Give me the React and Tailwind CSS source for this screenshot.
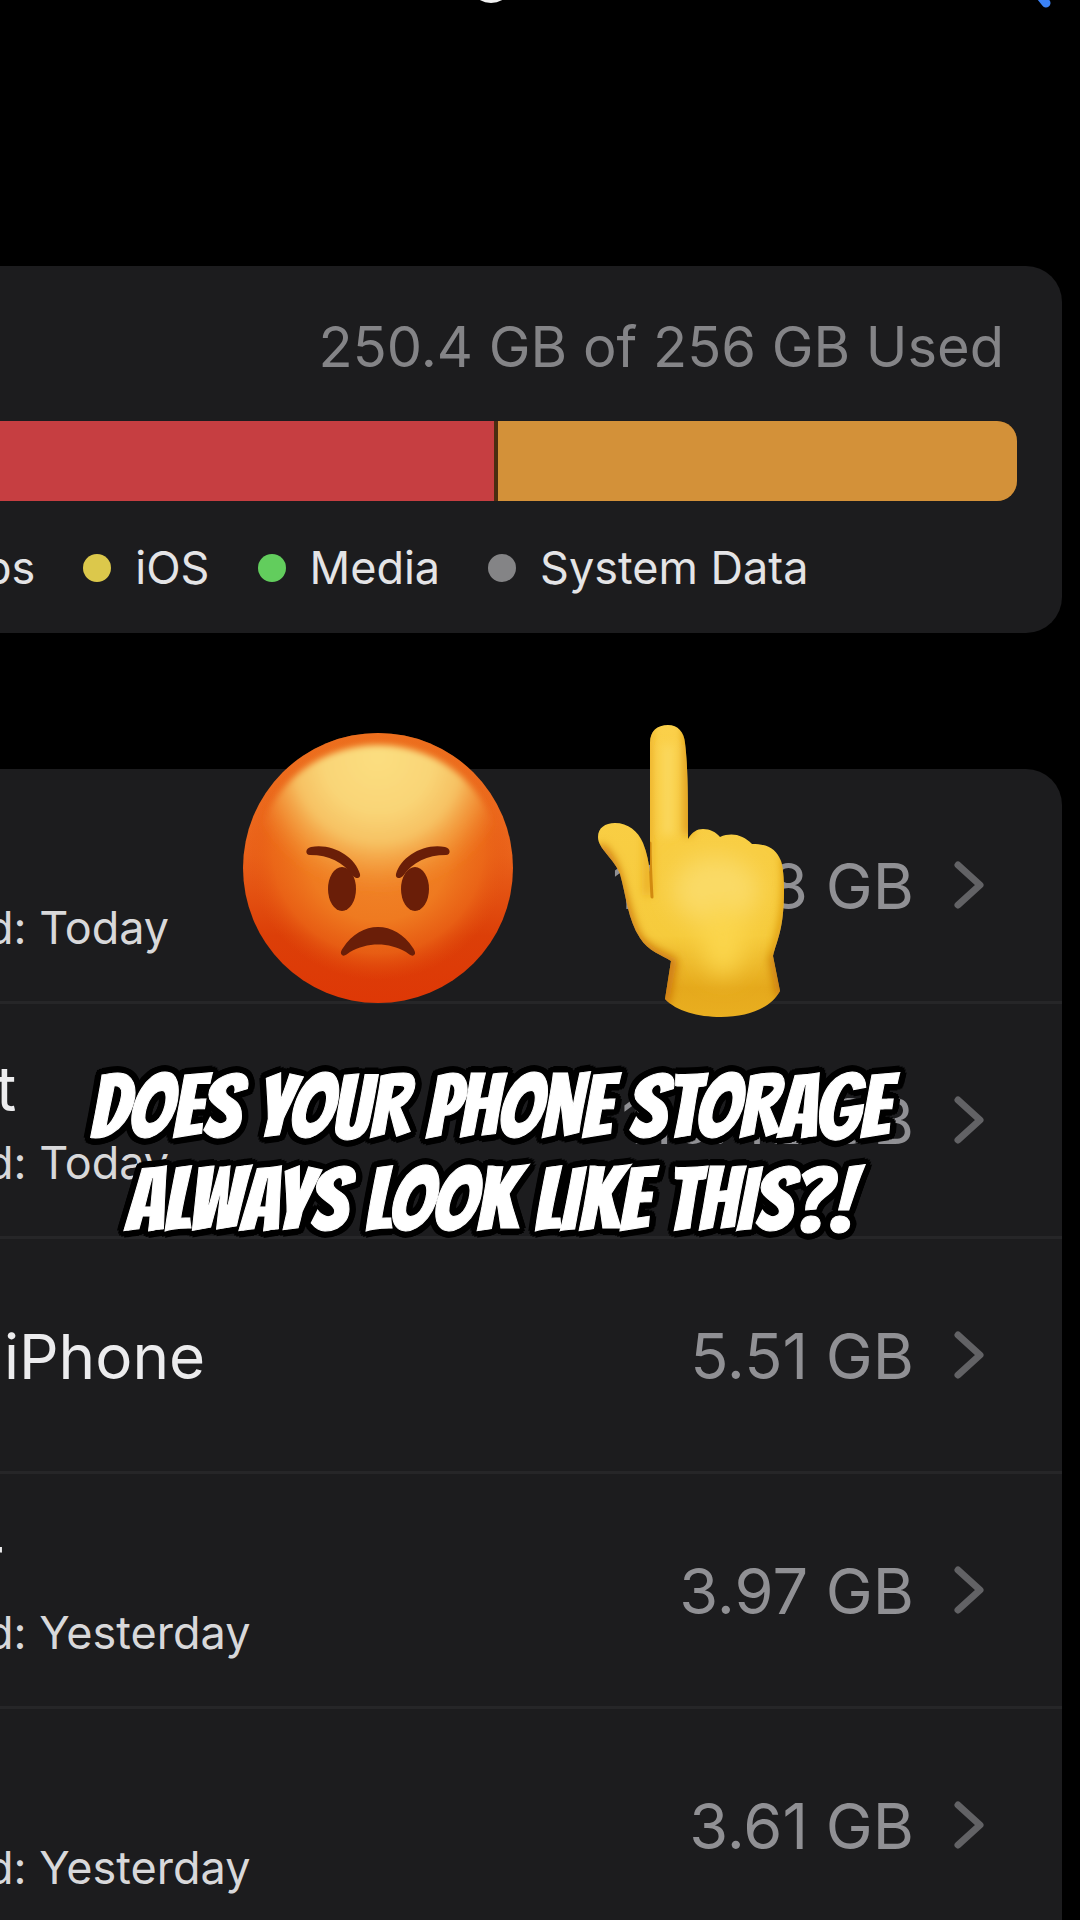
const legend = [
  { label: "ps", dot: "" },
  { label: "iOS", dot: "bg-[#dcc84b]" },
  { label: "Media", dot: "bg-[#62cd5d]" },
  { label: "System Data", dot: "bg-[#848486]" },
];

const apps = [
  { name: "", indent: "", used: "d: Today", size: "128.38 GB" },
  { name: "t", indent: "pl-4", used: "d: Today", size: "110.42 GB" },
  { name: "iPhone", indent: "pl-6", used: "", size: "5.51 GB" },
  { name: "r", indent: "pl-0", used: "d: Yesterday", size: "3.97 GB" },
  { name: "", indent: "", used: "d: Yesterday", size: "3.61 GB" },
];

function TopBar() {
  return (
    <header className="flex h-[266px] items-start justify-between pl-[480px] pr-[26px]">
      <svg className="h-1 w-6" viewBox="0 0 24 4" aria-hidden="true">
        <ellipse cx="11" cy="-6" rx="15" ry="9" fill="#f2f2f2" />
      </svg>
      <button aria-label="Search">
        <svg className="h-3 w-5" viewBox="0 0 20 12" aria-hidden="true">
          <path d="M4 -7 L12 3" stroke="#3b82f6" strokeWidth="9" strokeLinecap="round" />
        </svg>
      </button>
    </header>
  );
}

function StorageCard() {
  return (
    <section className="mr-[18px] rounded-r-[36px] bg-[#1c1c1e] pb-[35px] pt-[45px]">
      <h2 className="pr-[58px] text-right text-[56px] leading-[72px] text-[#848487]">
        250.4 GB of 256 GB Used
      </h2>

      {/* usage bar */}
      <div className="mr-[45px] mt-[38px] flex h-20 gap-1 overflow-hidden rounded-r-[20px] bg-[#4a2d10]">
        <div className="w-[494px] bg-[#c63e41]" />
        <div className="flex-1 bg-[#d39139]" />
      </div>

      <ul className="-ml-4 mt-[37px] flex gap-12 text-[45px] leading-[60px] text-[#e4e4e6]">
        {legend.map((item) => (
          <li key={item.label} className="flex items-center gap-6">
            {item.dot && <span className={`size-7 rounded-full ${item.dot}`} />}
            {item.label}
          </li>
        ))}
      </ul>
    </section>
  );
}

function AppRow({ name, indent, used, size }) {
  return (
    <li className="border-b-3 border-[#262628]">
      <button className="flex h-[232px] w-full items-center text-left">
        <span className="-ml-5 flex flex-1 flex-col pt-1">
          {/* the name line keeps its height when only the date shows */}
          {(name || used) && (
            <span className={`text-[62px] leading-[76px] text-[#ececee] ${indent}`}>
              {name || "\u00a0"}
            </span>
          )}
          {used && (
            <span className="pl-[6px] pt-[6px] text-[45px] leading-[60px] text-[#d8d8da]">{used}</span>
          )}
        </span>
        <span className="pt-[2px] text-[63px] leading-[76px] text-[#909094]">{size}</span>
        <svg className="ml-10 mr-[76px] h-[50px] w-8" viewBox="0 0 32 50" fill="none" aria-hidden="true">
          <path d="M4 5 L26 25 L4 45" stroke="#626265" strokeWidth="7" strokeLinecap="round" strokeLinejoin="round" />
        </svg>
      </button>
    </li>
  );
}

function AngryFace() {
  return (
    <svg className="mt-2 size-[270px]" viewBox="0 0 270 270" role="img" aria-label="Angry face">
      <defs>
        <linearGradient id="faceBase" x1="0" y1="0" x2="0" y2="1">
          <stop offset="0" stopColor="#f07a26" />
          <stop offset="0.45" stopColor="#ea621a" />
          <stop offset="0.75" stopColor="#dc3f08" />
          <stop offset="1" stopColor="#de3806" />
        </linearGradient>
        <radialGradient id="faceMid" cx="135" cy="115" r="132" gradientUnits="userSpaceOnUse">
          <stop offset="0" stopColor="#f1882c" />
          <stop offset="0.55" stopColor="#ef7a20" />
          <stop offset="0.8" stopColor="#ec6a18" stopOpacity="0.7" />
          <stop offset="1" stopColor="#e4520e" stopOpacity="0" />
        </radialGradient>
        <radialGradient
          id="faceShine"
          cx="0"
          cy="0"
          r="1"
          gradientUnits="userSpaceOnUse"
          gradientTransform="translate(135 24) scale(136 138)"
        >
          <stop offset="0" stopColor="#fbde80" />
          <stop offset="0.4" stopColor="#f9d577" />
          <stop offset="0.62" stopColor="#f7c566" stopOpacity="0.95" />
          <stop offset="0.8" stopColor="#f5a848" stopOpacity="0.6" />
          <stop offset="1" stopColor="#f28c2c" stopOpacity="0" />
        </radialGradient>
        <filter id="faceSoft" x="-10%" y="-10%" width="120%" height="120%">
          <feGaussianBlur stdDeviation="3" />
        </filter>
      </defs>
      <circle cx="135" cy="135" r="135" fill="url(#faceBase)" />
      <circle cx="135" cy="135" r="135" fill="url(#faceMid)" />
      <ellipse cx="135" cy="126" rx="121" ry="114" fill="url(#faceShine)" filter="url(#faceSoft)" />
      <g fill="#6a1e08">
        <ellipse cx="99" cy="156" rx="14" ry="22" />
        <ellipse cx="172" cy="156" rx="14" ry="22" />
        <path d="M67 122 C62 122 62 115 68 114 C90 110 112 124 117 141 C118 146 113 146 110 143 C100 129 86 122 67 122 Z" />
        <path d="M203 122 C208 122 208 115 202 114 C180 110 158 124 153 141 C152 146 157 146 160 143 C170 129 184 122 203 122 Z" />
        <path d="M99 222 C97 220 98 218 100 215 C118 187 152 187 170 215 C172 218 173 221 171 222 C169 224 166 221 163 219 C146 209 124 209 107 219 C104 221 101 224 99 222 Z" />
      </g>
    </svg>
  );
}

function PointingHand() {
  return (
    <svg className="h-[292px] w-[187px]" viewBox="0 0 187 292" role="img" aria-label="Hand pointing up">
      <defs>
        <clipPath id="handShape">
          <path d="M52 18 C52 6 59 0 70 0 C80 0 86 7 87 18 C90 42 90 75 90 114 C94 107 99 104 105 104 C112 104 118 107 122 112 C134 107 145 110 154 119 C170 119 178 124 183 136 C187 148 187 182 183 202 C180 216 177 222 175 231 L182 266 C173 283 150 292 123 292 C100 292 78 286 67 274 L73 236 C64 230 50 226 42 213 C30 195 28 170 22 149 C16 133 0 124 0 112 C0 103 7 98 17 98 C30 98 40 106 45 118 C49 128 51 138 52 150 Z" />
        </clipPath>
        <linearGradient id="handBase" x1="0" y1="0" x2="0" y2="1">
          <stop offset="0" stopColor="#fbd04a" />
          <stop offset="0.72" stopColor="#f6cb3c" />
          <stop offset="0.9" stopColor="#e5a91c" />
          <stop offset="1" stopColor="#e9ae20" />
        </linearGradient>
        <filter id="handSoft" x="-30%" y="-30%" width="160%" height="160%">
          <feGaussianBlur stdDeviation="5" />
        </filter>
        <filter id="handGlow" x="-60%" y="-60%" width="220%" height="220%">
          <feGaussianBlur stdDeviation="12" />
        </filter>
      </defs>
      <g clipPath="url(#handShape)">
        <rect width="187" height="292" fill="url(#handBase)" />
        <g filter="url(#handGlow)">
          <ellipse cx="118" cy="165" rx="44" ry="34" fill="#fada66" />
          <ellipse cx="125" cy="215" rx="22" ry="36" fill="#fbd54c" />
        </g>
        <g filter="url(#handSoft)" fill="none">
          <path d="M90 0 V110 M188 130 C192 180 184 205 176 232" stroke="#d9920c" strokeWidth="8" />
          <path d="M50 0 V170" stroke="#e5a012" strokeWidth="6" />
          <path d="M0 122 C22 135 22 180 38 212 C48 226 60 230 74 237 L66 280" stroke="#c96f0c" strokeWidth="9" />
          <path d="M176 230 L184 272" stroke="#c9780c" strokeWidth="10" />
          <path d="M70 20 V110" stroke="#fbd960" strokeWidth="10" />
        </g>
        <path d="M52 118 C52 140 53 155 54 172" stroke="#d18a10" strokeWidth="3" fill="none" strokeLinecap="round" />
      </g>
    </svg>
  );
}

function Caption() {
  return (
    <div className="pointer-events-none absolute inset-x-0 top-[725px] flex flex-col items-center pr-[100px]">
      <div className="flex items-start gap-[85px] pl-12">
        <AngryFace />
        <PointingHand />
      </div>
      {/* round black outline built from shadows */}
      <p className="mt-11 whitespace-nowrap text-center font-['Bangers',sans-serif] text-[88px] leading-[93px] text-white [-webkit-text-stroke:1px_white] [text-shadow:7px_0_black,-7px_0_black,0_7px_black,0_-7px_black,5px_5px_black,-5px_5px_black,5px_-5px_black,-5px_-5px_black,6px_3px_black,-6px_3px_black,6px_-3px_black,-6px_-3px_black,3px_6px_black,-3px_6px_black,3px_-6px_black,-3px_-6px_black]">
        DOES YOUR PHONE STORAGE
        <br />
        ALWAYS LOOK LIKE THIS?!
      </p>
    </div>
  );
}

export default function App() {
  return (
    <main className="relative min-h-screen overflow-hidden bg-black font-['Inter',sans-serif]">
      <TopBar />
      <StorageCard />
      <ul className="mr-[18px] mt-[136px] rounded-tr-[36px] bg-[#1c1c1e]">
        {apps.map((app) => (
          <AppRow key={app.size} {...app} />
        ))}
      </ul>
      <Caption />
    </main>
  );
}
